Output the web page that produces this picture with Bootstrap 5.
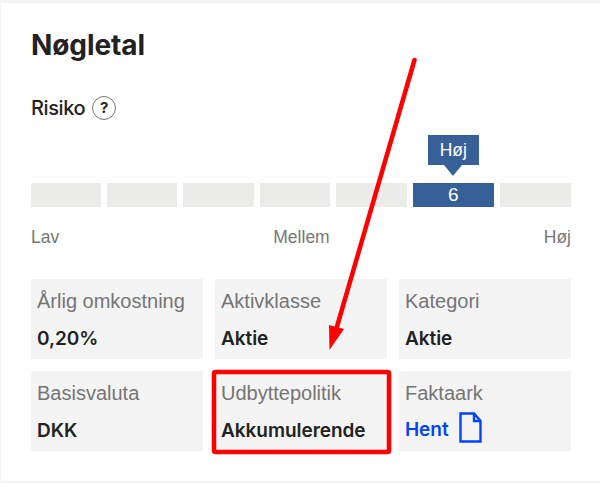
<!DOCTYPE html>
<html lang="da">
<head>
  <meta charset="UTF-8" />
  <title>Nøgletal</title>
  <link href="https://cdn.jsdelivr.net/npm/bootstrap@5.3.0/dist/css/bootstrap.min.css" rel="stylesheet"/>
  <style>
    html, body { height: 483px; overflow: hidden; }
    body {
      background-color: #f4f4f4;
      font-family: "Liberation Sans", Arial, sans-serif;
      color: #222;
      position: relative;
    }
    .panel {
      background: #fff;
      margin: 3px 0 2px 1px;
      height: 478px;
      padding: 26px 29px 0 30px;
    }
    .panel-title {
      font-family: Inter, "Liberation Sans", sans-serif;
      font-size: 28px;
      font-weight: 700;
      line-height: 32px;
      letter-spacing: -0.1px;
      margin: 0;
      color: #222;
    }
    .risk-head {
      margin-top: 34px;
      height: 26px;
      font-family: Inter, "Liberation Sans", sans-serif;
      font-size: 20px;
      font-weight: 500;
      letter-spacing: -0.4px;
    }
    .help-dot {
      width: 24px;
      height: 24px;
      border: 1px solid #777;
      border-radius: 50%;
      font-size: 15px;
      font-weight: 700;
      margin-left: 7px;
      letter-spacing: 0;
    }
    .scale-wrap { margin-top: 62px; }
    .scale-bar { gap: 6px; height: 24px; }
    .seg { flex: 0 0 70.2px; background: #ebebe9; }
    .seg:nth-child(5) { flex-basis: 71px; }
    .seg:last-child { flex: 1 1 0; }
    .seg-active {
      flex: 0 0 81px;
      background: #386098;
      color: #fff;
      font-size: 19px;
      position: relative;
    }
    .seg-tip {
      position: absolute;
      bottom: 42px;
      left: 15px;
      width: 51px;
      height: 30px;
      background: #386098;
      font-size: 17.5px;
    }
    .seg-tip::after {
      content: "";
      position: absolute;
      top: 100%;
      left: 16px;
      border-style: solid;
      border-width: 11px 9px 0 9px;
      border-color: #386098 transparent transparent transparent;
    }
    .scale-labels {
      margin-top: 21px;
      font-size: 17.5px;
      line-height: 19px;
      color: #777;
    }
    .tile-grid {
      display: grid;
      grid-template-columns: repeat(3, 172px);
      grid-auto-rows: 80px;
      gap: 12px;
      margin-top: 32px;
    }
    .tile { background: #f4f4f4; padding: 9px 6px 0; }
    .tile-label { font-size: 20px; line-height: 26px; color: #757575; white-space: nowrap; }
    .tile-value {
      font-family: Inter, "Liberation Sans", sans-serif;
      font-size: 19px;
      font-weight: 600;
      line-height: 26px;
      margin-top: 12px;
      letter-spacing: -0.05px;
      white-space: nowrap;
    }
    .hent-row { margin-top: 11px; }
    .hent-link { color: #0044ff; text-decoration: none; }
    .hent-link svg { margin-left: 10px; vertical-align: -7px; margin-top: -6px; }
    .mark-layer { position: absolute; left: 0; top: 0; pointer-events: none; }
  </style>
</head>
<body>
  <div class="panel">
    <h2 class="panel-title">Nøgletal</h2>

    <div class="risk-head d-flex align-items-center">
      Risiko <span class="help-dot d-inline-flex align-items-center justify-content-center">?</span>
    </div>

    <div class="scale-wrap">
      <div class="scale-bar d-flex">
        <div class="seg"></div>
        <div class="seg"></div>
        <div class="seg"></div>
        <div class="seg"></div>
        <div class="seg"></div>
        <div class="seg seg-active d-flex align-items-center justify-content-center">
          6
          <div class="seg-tip d-flex align-items-center justify-content-center">Høj</div>
        </div>
        <div class="seg"></div>
      </div>
      <div class="scale-labels d-flex justify-content-between">
        <span>Lav</span><span>Mellem</span><span>Høj</span>
      </div>
    </div>

    <div class="tile-grid">
      <div class="tile"><div class="tile-label">Årlig omkostning</div><div class="tile-value">0,20%</div></div>
      <div class="tile"><div class="tile-label">Aktivklasse</div><div class="tile-value">Aktie</div></div>
      <div class="tile"><div class="tile-label">Kategori</div><div class="tile-value">Aktie</div></div>
      <div class="tile"><div class="tile-label">Basisvaluta</div><div class="tile-value">DKK</div></div>
      <div class="tile"><div class="tile-label">Udbyttepolitik</div><div class="tile-value">Akkumulerende</div></div>
      <div class="tile">
        <div class="tile-label">Faktaark</div>
        <div class="tile-value hent-row">
          <a class="hent-link" href="#">Hent<svg width="23" height="31" viewBox="0 0 23 31" fill="none" stroke="#0044ff" stroke-width="2.4"><path d="M1.5 1.5H15L21.5 9V29.5H1.5Z"/><path d="M15 1.5V9H21.5"/></svg></a>
        </div>
      </div>
    </div>
  </div>

  <svg class="mark-layer" width="600" height="483" viewBox="0 0 600 483">
    <rect x="214" y="372" width="175" height="80" rx="1.5" fill="none" stroke="#ff0000" stroke-width="4.5"/>
    <path d="M414.5 60L336 330" stroke="#ff0000" stroke-width="4.5" stroke-linecap="round" fill="none"/>
    <path d="M329 325L344 329L329.5 350Z" fill="#ff0000"/>
  </svg>

  <script src="https://cdn.jsdelivr.net/npm/bootstrap@5.3.0/dist/js/bootstrap.bundle.min.js"></script>
</body>
</html>
